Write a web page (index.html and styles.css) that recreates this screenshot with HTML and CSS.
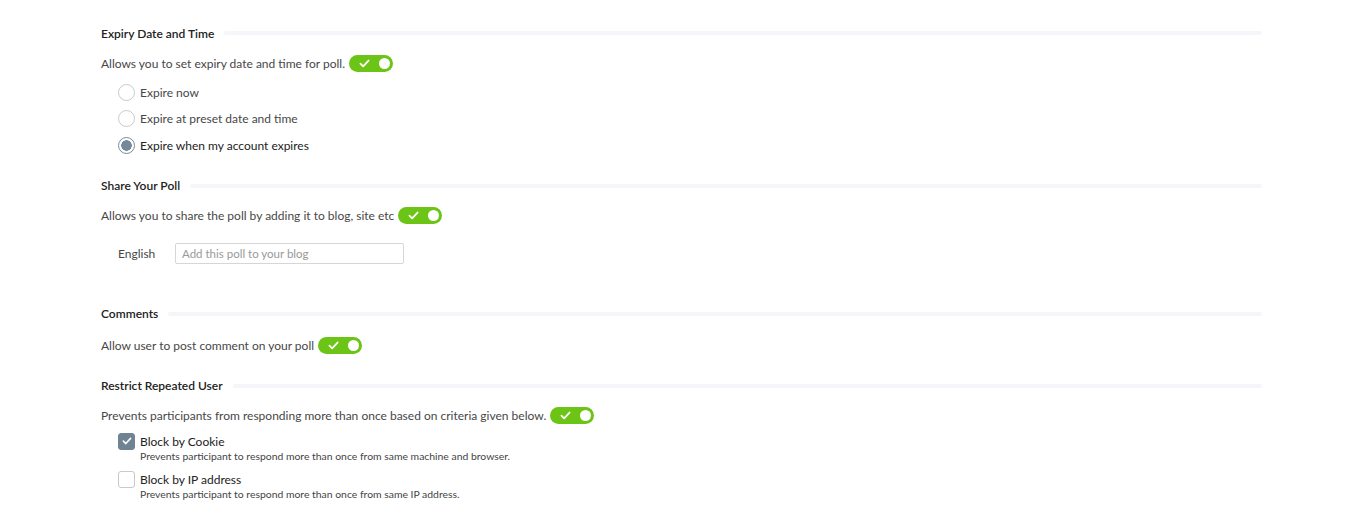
FILE: index.html
```html
<html lang="en">
<head>
  <meta charset="UTF-8">
  <title>Poll Settings</title>
  <link rel="stylesheet" href="styles.css">
</head>
<body>
  <div class="settings">

    <section class="group">
      <h3 class="group-title"><span>Expiry Date and Time</span></h3>
      <p class="switch-row">Allows you to set expiry date and time for poll.
        <span class="toggle"><svg viewBox="0 0 12 10" width="11" height="9"><path d="M1.5 5.2l3 3 6-6.5" fill="none" stroke="#fff" stroke-width="2" stroke-linecap="round" stroke-linejoin="round"/></svg><i></i></span>
      </p>
      <div class="options">
        <label class="radio"><span class="dot"></span>Expire now</label>
        <label class="radio"><span class="dot"></span>Expire at preset date and time</label>
        <label class="radio on"><span class="dot"></span>Expire when my account expires</label>
      </div>
    </section>

    <section class="group share">
      <h3 class="group-title"><span>Share Your Poll</span></h3>
      <p class="switch-row">Allows you to share the poll by adding it to blog, site etc
        <span class="toggle"><svg viewBox="0 0 12 10" width="11" height="9"><path d="M1.5 5.2l3 3 6-6.5" fill="none" stroke="#fff" stroke-width="2" stroke-linecap="round" stroke-linejoin="round"/></svg><i></i></span>
      </p>
      <div class="lang-row">
        <span class="lang">English</span>
        <input type="text" placeholder="Add this poll to your blog">
      </div>
    </section>

    <section class="group comments">
      <h3 class="group-title"><span>Comments</span></h3>
      <p class="switch-row wide">Allow user to post comment on your poll
        <span class="toggle"><svg viewBox="0 0 12 10" width="11" height="9"><path d="M1.5 5.2l3 3 6-6.5" fill="none" stroke="#fff" stroke-width="2" stroke-linecap="round" stroke-linejoin="round"/></svg><i></i></span>
      </p>
    </section>

    <section class="group restrict">
      <h3 class="group-title"><span>Restrict Repeated User</span></h3>
      <p class="switch-row">Prevents participants from responding more than once based on criteria given below.
        <span class="toggle"><svg viewBox="0 0 12 10" width="11" height="9"><path d="M1.5 5.2l3 3 6-6.5" fill="none" stroke="#fff" stroke-width="2" stroke-linecap="round" stroke-linejoin="round"/></svg><i></i></span>
      </p>
      <div class="options checks">
        <div class="check on">
          <span class="box"><svg viewBox="0 0 12 10" width="10" height="8"><path d="M1.5 5.2l3 3 6-6.5" fill="none" stroke="#fff" stroke-width="2" stroke-linecap="round" stroke-linejoin="round"/></svg></span>
          <div>
            <div class="check-label">Block by Cookie</div>
            <div class="check-note">Prevents participant to respond more than once from same machine and browser.</div>
          </div>
        </div>
        <div class="check">
          <span class="box"></span>
          <div>
            <div class="check-label">Block by IP address</div>
            <div class="check-note">Prevents participant to respond more than once from same IP address.</div>
          </div>
        </div>
      </div>
    </section>

  </div>
</body>
</html>
```

FILE: styles.css
```css
body {
  margin: 0;
  background: #fff;
  font-family: "Lato", "Open Sans", sans-serif;
  color: #474747;
  font-size: 12px;
}

.settings {
  padding: 24px 89px 0 101px;
}

.group-title {
  display: flex;
  align-items: center;
  margin: 0;
  font-size: 12px;
  font-weight: 600;
  color: #222;
  height: 18px;
}

.group-title::after {
  content: "";
  flex: 1;
  height: 4px;
  border-radius: 2px;
  background: #f5f6f9;
  margin-left: 10px;
}

.switch-row {
  display: flex;
  align-items: center;
  margin: 12px 0 0;
  height: 18px;
}

.switch-row.wide {
  margin-top: 14px;
}

.toggle {
  display: inline-flex;
  align-items: center;
  justify-content: space-between;
  width: 44px;
  height: 17px;
  box-sizing: border-box;
  padding: 0 3px 0 10px;
  margin-left: 4px;
  border-radius: 9px;
  background: #6cc417;
}

.toggle i {
  width: 11px;
  height: 11px;
  border-radius: 50%;
  background: #fff;
}

.options {
  padding: 11px 0 0 17px;
  display: flex;
  flex-direction: column;
}

.radio {
  display: flex;
  align-items: center;
  height: 18px;
  margin-bottom: 8.5px;
}

.dot {
  width: 17px;
  height: 17px;
  box-sizing: border-box;
  border: 1px solid #c9c9c9;
  border-radius: 50%;
  margin-right: 5px;
  background: #fff;
}

.radio.on {
  color: #222;
}

.radio.on .dot {
  border-color: #7d8a95;
  background: radial-gradient(circle, #75899a 0 5px, #fff 5.5px);
}

.lang-row {
  display: flex;
  align-items: center;
  padding: 18px 0 0 17px;
}

.lang {
  width: 57px;
}

.lang-row input {
  width: 229px;
  height: 21px;
  box-sizing: border-box;
  border: 1px solid #d6d6d6;
  border-radius: 2px;
  padding: 0 6px;
  font: inherit;
  font-size: 11.5px;
}

.lang-row input::placeholder {
  color: #999;
}

.group.share {
  margin-top: 14px;
}

.group.comments {
  margin-top: 41px;
}

.group.restrict {
  margin-top: 22px;
}

.checks {
  padding-top: 8px;
}

.check {
  display: flex;
  align-items: flex-start;
  margin-bottom: 9px;
}

.box {
  width: 17px;
  height: 17px;
  box-sizing: border-box;
  border: 1px solid #c9c9c9;
  border-radius: 3px;
  margin-right: 5px;
  display: flex;
  align-items: center;
  justify-content: center;
}

.check.on .box {
  background: #6f8393;
  border-color: #6f8393;
}

.check-label {
  color: #222;
  line-height: 17px;
}

.check-note {
  font-size: 10.4px;
  color: #444;
  margin-top: 0;
}
```
